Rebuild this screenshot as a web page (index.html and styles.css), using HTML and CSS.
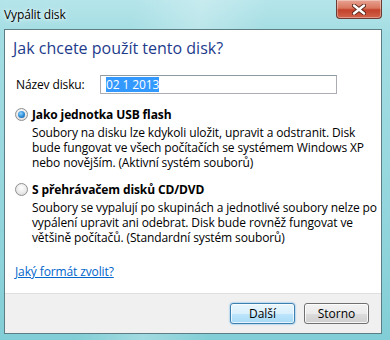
FILE: index.html
```html
<!DOCTYPE html>
<html lang="cs">
<head>
<meta charset="utf-8">
<title>Vypálit disk</title>
<link rel="stylesheet" href="styles.css">
</head>
<body>
<div class="window">
  <div class="titlebar">
    <span class="title">Vypálit disk</span>
    <div class="close" aria-label="Zavřít">
      <svg width="14" height="11" viewBox="0 0 14 11">
        <path d="M2 1.5 L12 9.5 M12 1.5 L2 9.5" stroke="#5a2418" stroke-width="4.2" stroke-linecap="round"/>
        <path d="M2 1.5 L12 9.5 M12 1.5 L2 9.5" stroke="#ffffff" stroke-width="2.4" stroke-linecap="round"/>
      </svg>
    </div>
  </div>
  <div class="client">
    <div class="content">
      <h1 class="heading">Jak chcete použít tento disk?</h1>
      <div class="name-row">
        <span class="label">Název disku:</span>
        <div class="textbox"><span class="sel">02 1 2013</span></div>
      </div>
      <div class="option">
        <div class="radio-row"><span class="radio checked"></span><span class="opt-title">Jako jednotka USB flash</span></div>
        <p class="desc">Soubory na disku lze kdykoli uložit, upravit a odstranit. Disk<br>bude fungovat ve všech počítačích se systémem Windows XP<br>nebo novějším. (Aktivní systém souborů)</p>
      </div>
      <div class="option second">
        <div class="radio-row"><span class="radio"></span><span class="opt-title">S přehrávačem disků CD/DVD</span></div>
        <p class="desc">Soubory se vypalují po skupinách a jednotlivé soubory nelze po<br>vypálení upravit ani odebrat. Disk bude rovněž fungovat ve<br>většině počítačů. (Standardní systém souborů)</p>
      </div>
      <a class="link" href="#">Jaký formát zvolit?</a>
    </div>
    <div class="footer">
      <button class="btn default">Další</button>
      <button class="btn">Storno</button>
    </div>
  </div>
</div>
</body>
</html>
```
FILE: styles.css
```css
html, body {
  margin: 0;
  padding: 0;
}
body {
  width: 390px;
  height: 340px;
  overflow: hidden;
  font-family: "Open Sans", "Noto Sans", sans-serif;
  font-size: 12px;
  letter-spacing: -0.12px;
  color: #000;
}
.window {
  width: 390px;
  height: 340px;
  box-sizing: border-box;
  padding: 0 8px 6px 4px;
  display: flex;
  flex-direction: column;
  background:
    linear-gradient(100deg, rgba(255,255,255,0) 30%, rgba(255,255,255,0.25) 45%, rgba(255,255,255,0) 60%),
    linear-gradient(180deg, #b5e5ea 0%, #a3dde3 10%, #94d6dd 60%, #82ced6 100%);
}
.titlebar {
  height: 29px;
  flex: none;
  position: relative;
  display: flex;
  align-items: flex-start;
}
.title {
  margin-top: 7px;
  font-size: 12px;
  line-height: 15px;
  color: #000;
  text-shadow: 0 0 6px rgba(255,255,255,0.9), 0 0 3px rgba(255,255,255,0.9);
}
.close {
  position: absolute;
  top: 0;
  right: 0;
  width: 46px;
  height: 19px;
  box-sizing: border-box;
  border: 1px solid #6b3a33;
  border-top: none;
  border-radius: 0 0 4px 4px;
  background: linear-gradient(180deg, #e8a393 0%, #d9775f 45%, #c2412a 55%, #d2634b 100%);
  display: flex;
  align-items: center;
  justify-content: center;
  box-shadow: inset 0 0 0 1px rgba(255,255,255,0.35);
}
.client {
  flex: 1;
  display: flex;
  flex-direction: column;
  background: #fff;
  border: 1px solid #5d7d84;
}
.content {
  flex: 1;
  display: flex;
  flex-direction: column;
  padding: 8px 0 0 8px;
}
.heading {
  margin: 0;
  font-weight: normal;
  font-size: 16px;
  line-height: 20px;
  letter-spacing: 0;
  color: #1e3b8c;
}
.name-row {
  margin-top: 17px;
  display: flex;
  align-items: center;
  height: 19px;
}
.label {
  width: 84px;
  padding-left: 3px;
  line-height: 15px;
}
.textbox {
  width: 237px;
  height: 19px;
  box-sizing: border-box;
  border: 1px solid #abadb3;
  border-top-color: #8e9aa2;
  display: flex;
  align-items: center;
  padding-left: 5px;
}
.sel {
  background: #3399ff;
  color: #fff;
  line-height: 15px;
}
.option {
  margin-top: 13px;
  padding-left: 2px;
}
.option.second {
  margin-top: 12px;
}
.radio-row {
  display: flex;
  align-items: center;
  height: 15px;
}
.radio {
  width: 13px;
  height: 13px;
  box-sizing: border-box;
  border-radius: 50%;
  border: 1px solid #8f8f8f;
  background: radial-gradient(circle at 50% 35%, #ffffff 0%, #e8e8e8 60%, #cfcfcf 100%);
  margin-right: 4px;
  display: flex;
  align-items: center;
  justify-content: center;
}
.radio.checked::after {
  content: "";
  width: 7px;
  height: 7px;
  border-radius: 50%;
  background: radial-gradient(circle at 40% 35%, #8fd3ff 0%, #2a8ad4 55%, #0f4f8e 100%);
}
.opt-title {
  font-weight: bold;
  line-height: 15px;
}
.desc {
  margin: 3px 0 0 17px;
  white-space: nowrap;
  line-height: 15px;
}
.link {
  margin-top: 19px;
  margin-left: 2px;
  align-self: flex-start;
  color: #0066cc;
  text-decoration: underline;
  line-height: 15px;
}
.footer {
  height: 40px;
  flex: none;
  background: #f0f0f0;
  border-top: 1px solid #dfdfdf;
  display: flex;
  justify-content: flex-end;
  align-items: flex-start;
  padding: 9px 12px 0 0;
  box-sizing: border-box;
  gap: 9px;
}
.btn {
  width: 65px;
  height: 21px;
  font-family: inherit;
  font-size: 12px;
  padding: 0;
  border: 1px solid #707070;
  border-radius: 3px;
  background: linear-gradient(180deg, #f2f2f2 0%, #ebebeb 50%, #dddddd 51%, #cfcfcf 100%);
  color: #000;
  box-shadow: inset 0 0 0 1px rgba(255,255,255,0.8);
}
.btn.default {
  border-color: #3c7fb1;
  background: linear-gradient(180deg, #eaf6fd 0%, #d9f0fc 50%, #bee6fd 51%, #a7d9f5 100%);
  box-shadow: inset 0 0 0 1px rgba(255,255,255,0.7), 0 0 2px #48a6e6;
}
```
